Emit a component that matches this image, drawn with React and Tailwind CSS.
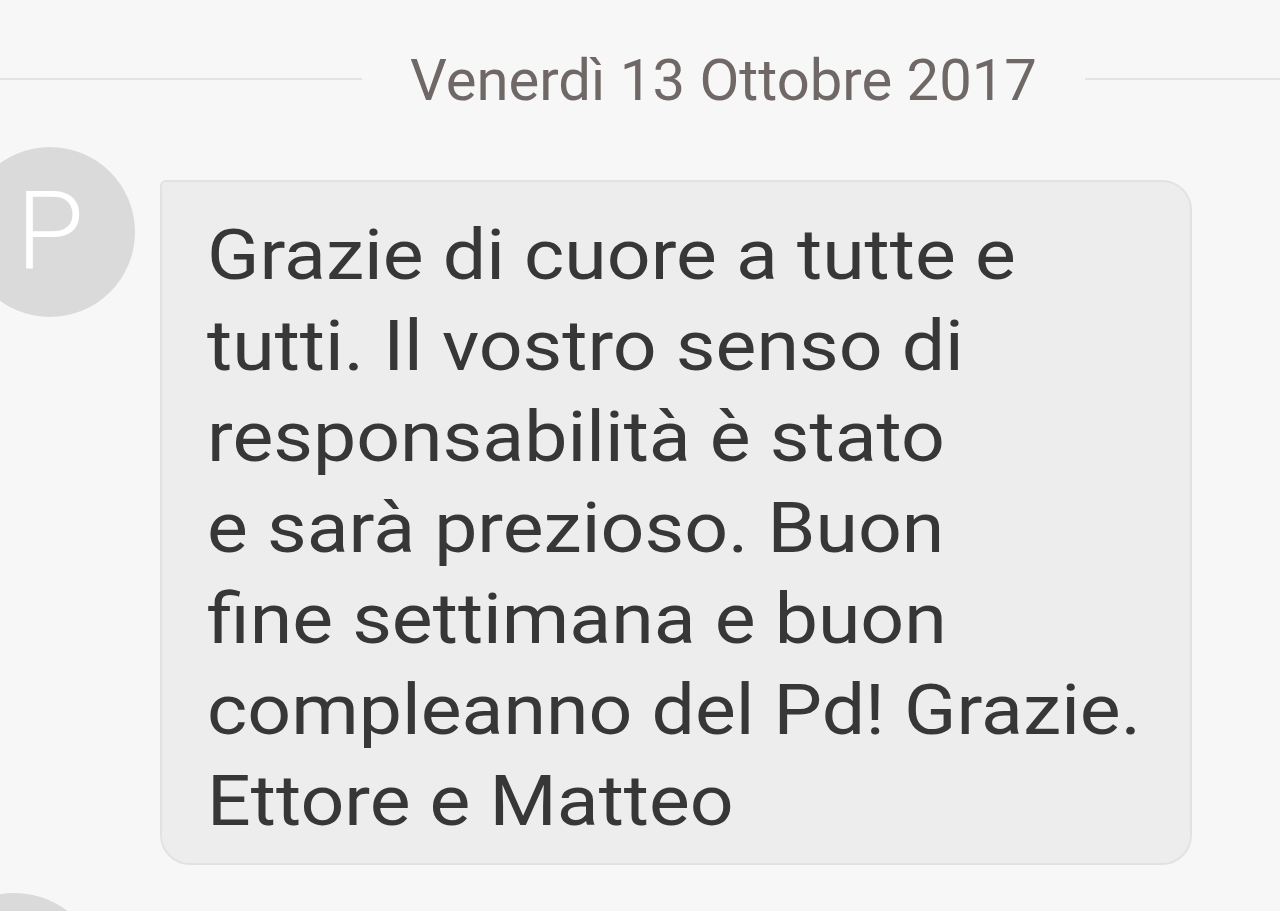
export default function App() {
  const lines = [
    'Grazie di cuore a tutte e',
    'tutti. Il vostro senso di',
    'responsabilità è stato',
    'e sarà prezioso. Buon',
    'fine settimana e buon',
    'compleanno del Pd! Grazie.',
    'Ettore e Matteo',
  ];

  return (
    <div className="h-[911px] w-[1280px] overflow-hidden bg-[#f7f7f7] font-['Roboto','Liberation_Sans',sans-serif]">
      {/* Date separator */}
      <div className="flex h-[147px] items-start pt-[48px]">
        <div className="mt-[30px] h-[2px] w-[362px] bg-[#e3e3e3]" />
        <div className="px-[48px] text-[58px] leading-[64px] text-[#6f6866]">
          Venerdì 13 Ottobre 2017
        </div>
        <div className="mt-[30px] h-[2px] flex-1 bg-[#e3e3e3]" />
      </div>

      {/* Message */}
      <div className="flex items-start">
        <div className="-ml-[35px] flex h-[170px] w-[170px] shrink-0 items-center justify-center rounded-full bg-[#dadada]">
          <span className="font-light text-[110px] leading-none text-white">P</span>
        </div>
        <div className="ml-[25px] mt-[33px] w-[1032px] rounded-[30px] rounded-tl-[6px] border-2 border-[#e2e2e2] bg-[#ededed] pb-[16px] pl-[45px] pt-[28px] text-[70px] leading-[91px] text-[#383737]">
          <div className="origin-left scale-x-110">
            {lines.map((l, i) => (
              <div key={i} className="whitespace-nowrap">{l}</div>
            ))}
          </div>
        </div>
      </div>

      {/* Next avatar, cut off */}
      <div className="-ml-[70px] mt-[28px] h-[170px] w-[170px] rounded-full bg-[#dadada]" />
    </div>
  );
}
